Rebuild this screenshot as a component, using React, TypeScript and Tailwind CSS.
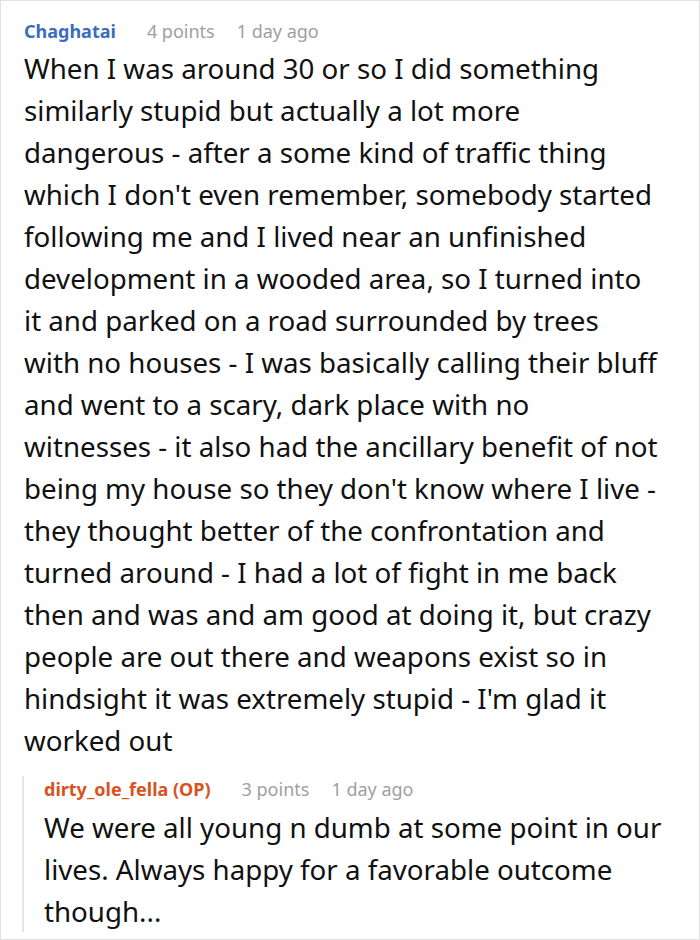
export default function App() {
  return (
    <div className="w-[700px] h-[940px] bg-white border border-[#e2e2e2] box-border px-[23px] pt-[17px] font-['Noto_Sans',sans-serif]">
      {/* Parent comment */}
      <div className="flex items-center text-[18px] leading-[26px]">
        <span className="font-bold text-[#3b6dbf]">Chaghatai</span>
        <span className="ml-[31px] text-[#a0a0a0]">4 points</span>
        <span className="ml-[22px] text-[#a0a0a0]">1 day ago</span>
      </div>
      <p className="mt-[3px] text-[27.7px] leading-[42px] text-[#111] w-[634px]">
        When I was around 30 or so I did something similarly stupid but actually a lot more
        dangerous - after a some kind of traffic thing which I don't even remember, somebody
        started following me and I lived near an unfinished development in a wooded area, so I
        turned into it and parked on a road surrounded by trees with no houses - I was basically
        calling their bluff and went to a scary, dark place with no witnesses - it also had the
        ancillary benefit of not being my house so they don't know where I live - they thought
        better of the confrontation and turned around - I had a lot of fight in me back then and
        was and am good at doing it, but crazy people are out there and weapons exist so in
        hindsight it was extremely stupid - I'm glad it worked out
      </p>

      {/* Reply */}
      <div className="mt-[27px] -ml-[2px] border-l-2 border-[#e6e6e6] pl-[20px]">
        <div className="-mt-[12px] flex items-center text-[18px] leading-[26px]">
          <span className="font-bold text-[#d9531e]">dirty_ole_fella (OP)</span>
          <span className="ml-[31px] text-[#a0a0a0]">3 points</span>
          <span className="ml-[22px] text-[#a0a0a0]">1 day ago</span>
        </div>
        <p className="mt-[4px] -mb-[10px] text-[27.7px] leading-[42px] text-[#111] w-[630px]">
          We were all young n dumb at some point in our lives. Always happy for a favorable
          outcome though...
        </p>
      </div>
    </div>
  );
}
